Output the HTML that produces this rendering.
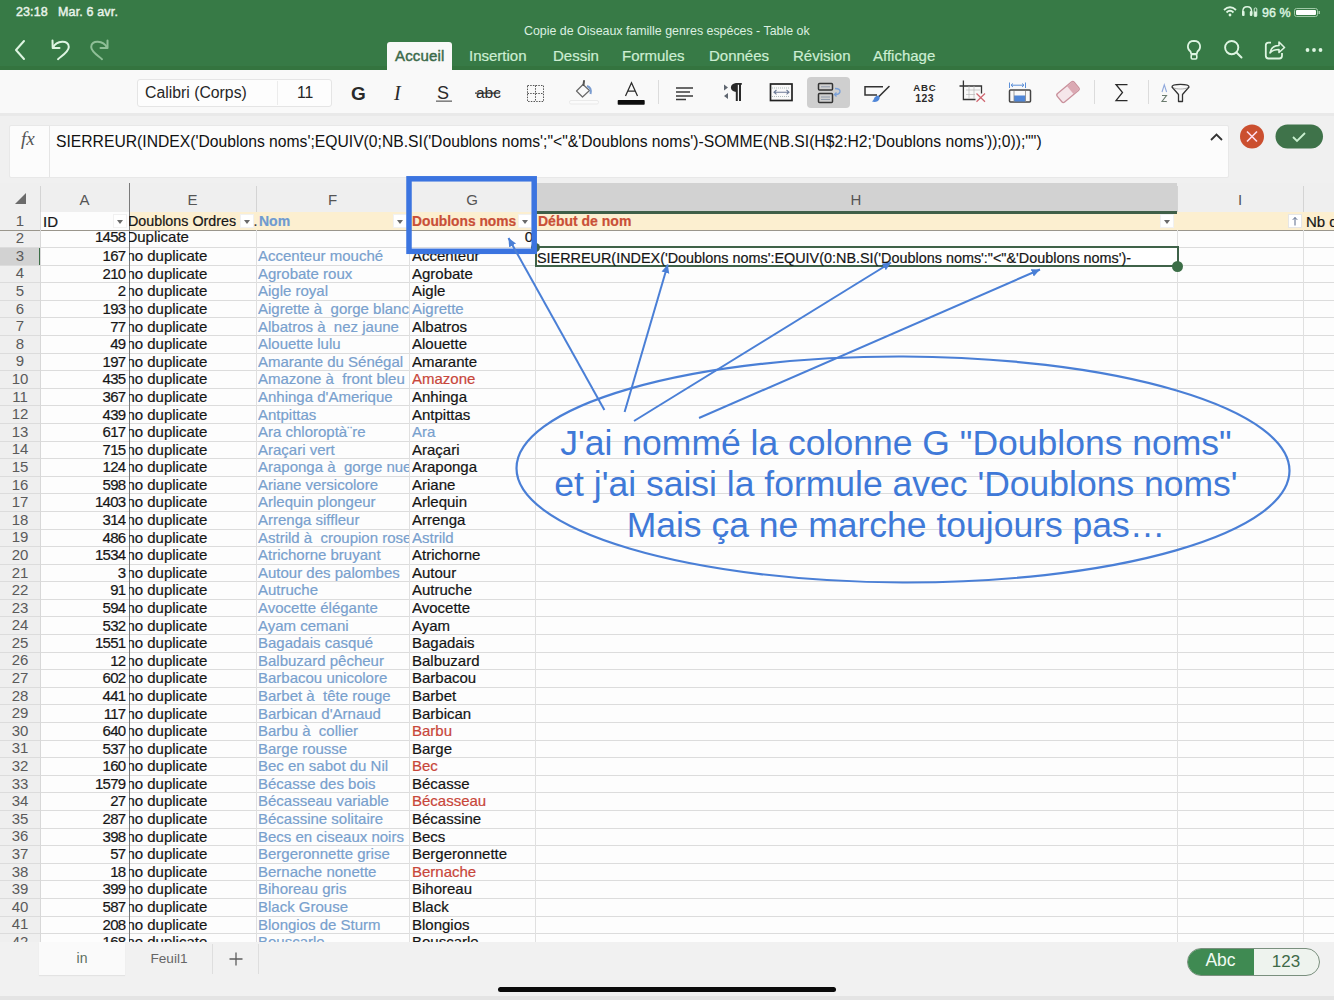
<!DOCTYPE html><html><head><meta charset="utf-8"><style>
*{margin:0;padding:0;box-sizing:border-box}
html,body{width:1334px;height:1000px;overflow:hidden;background:#f2f2f2;font-family:"Liberation Sans",sans-serif}
.a{position:absolute}
.t{position:absolute;white-space:nowrap;line-height:1}
.cell{position:absolute;white-space:pre;overflow:hidden;font-size:15px;line-height:17px;color:#161616;-webkit-text-stroke:0.2px}
.rn{position:absolute;left:0;width:40px;text-align:center;font-size:15px;color:#5a5a5a;line-height:17px}
.fb{position:absolute;width:14px;height:14px;background:#fff;border:1px solid #f1f1f1}
.fb:after{content:"";position:absolute;left:3px;top:5px;border-left:3.5px solid transparent;border-right:3.5px solid transparent;border-top:4px solid #6a6a6a}
</style></head><body>
<div class="a" style="left:0;top:0;width:1334px;height:70px;background:#377a46"></div>
<div class="a" style="left:0;top:66px;width:1334px;height:4px;background:#34743f"></div>
<div class="t" style="left:16px;top:6px;font-size:12.5px;color:#e8f3ea;-webkit-text-stroke:0.45px #e8f3ea;letter-spacing:0.1px">23:18</div>
<div class="t" style="left:58px;top:6px;font-size:12.5px;color:#e8f3ea;-webkit-text-stroke:0.45px #e8f3ea;letter-spacing:0.15px">Mar. 6 avr.</div>
<div class="t" style="left:524px;top:25px;font-size:12.4px;color:#dcefe0">Copie de Oiseaux famille genres espéces - Table ok</div>
<div class="a" style="left:387px;top:42px;width:65px;height:28px;background:#f8f8f8;border-radius:3px 3px 0 0"></div>
<div class="t" style="left:395px;top:48px;font-size:15px;color:#3b6a49;-webkit-text-stroke:0.45px #3b6a49;letter-spacing:0.15px">Accueil</div>
<div class="t" style="left:469px;top:48px;font-size:15px;color:#cdeed3;-webkit-text-stroke:0.2px #cdeed3">Insertion</div>
<div class="t" style="left:553px;top:48px;font-size:15px;color:#cdeed3;-webkit-text-stroke:0.2px #cdeed3">Dessin</div>
<div class="t" style="left:622px;top:48px;font-size:15px;color:#cdeed3;-webkit-text-stroke:0.2px #cdeed3">Formules</div>
<div class="t" style="left:709px;top:48px;font-size:15px;color:#cdeed3;-webkit-text-stroke:0.2px #cdeed3">Données</div>
<div class="t" style="left:793px;top:48px;font-size:15px;color:#cdeed3;-webkit-text-stroke:0.2px #cdeed3">Révision</div>
<div class="t" style="left:873px;top:48px;font-size:15px;color:#cdeed3;-webkit-text-stroke:0.2px #cdeed3">Affichage</div>
<svg class="a" style="left:0;top:30px" width="130" height="40" viewBox="0 30 130 40">
<path d="M24 41 L16 50 L24 59" fill="none" stroke="#def5e2" stroke-width="2" stroke-linecap="round" stroke-linejoin="round"/>
<path d="M52.5 40.5 L52.7 48 L59.5 48" fill="none" stroke="#def5e2" stroke-width="2" stroke-linecap="round" stroke-linejoin="round"/>
<path d="M53 47.5 C56.5 40.5, 68.8 39.5, 68.8 47 C68.8 51.5, 63 55, 58 59.2" fill="none" stroke="#def5e2" stroke-width="2" stroke-linecap="round"/>
<path d="M107.5 40.5 L107.5 48 L100.5 48" fill="none" stroke="#8fbf97" stroke-width="2" stroke-linecap="round" stroke-linejoin="round"/>
<path d="M107 47.5 C103.5 40.5, 91.2 39.5, 91.2 47 C91.2 51.5, 97 55, 102 59.2" fill="none" stroke="#8fbf97" stroke-width="2" stroke-linecap="round"/>
</svg>
<svg class="a" style="left:1218px;top:4px" width="110" height="16" viewBox="1218 4 110 16">
<path d="M1224 10 Q1230 4.5 1236 10" fill="none" stroke="#def5e2" stroke-width="1.8"/>
<path d="M1226.5 12.5 Q1230 9 1233.5 12.5" fill="none" stroke="#def5e2" stroke-width="1.8"/>
<circle cx="1230" cy="15" r="1.4" fill="#def5e2"/>
<path d="M1242.8 14 L1242.8 11.5 Q1242.8 6.8 1247.2 6.8 Q1251.6 6.8 1251.6 11.5 L1251.6 14" fill="none" stroke="#def5e2" stroke-width="1.4"/>
<rect x="1242" y="11" width="2.6" height="5" rx="1" fill="#def5e2"/><rect x="1249.8" y="11" width="2.6" height="5" rx="1" fill="#def5e2"/>
<rect x="1254.2" y="8" width="2.6" height="8.5" rx="1" fill="none" stroke="#def5e2" stroke-width="0.9"/><rect x="1254.2" y="11.5" width="2.6" height="5" fill="#def5e2"/>
<rect x="1294.5" y="8.5" width="23" height="8" rx="2" fill="none" stroke="#9fc9a6" stroke-width="1"/>
<rect x="1296" y="10" width="20" height="5" rx="1" fill="#fff"/>
<rect x="1318.5" y="11" width="1.5" height="3" fill="#9fc9a6"/>
</svg>
<div class="t" style="left:1262px;top:6.5px;font-size:12.5px;color:#def5e2;-webkit-text-stroke:0.4px #def5e2">96 %</div>
<svg class="a" style="left:1180px;top:36px" width="154" height="30" viewBox="1180 36 154 30">
<path d="M1191.3 54 L1190.5 51.5 C1186.5 48.5 1186.8 41 1194 40.8 C1201.2 41 1201.5 48.5 1197.5 51.5 L1196.7 54 Z" fill="none" stroke="#def5e2" stroke-width="1.8" stroke-linejoin="round"/>
<rect x="1191.2" y="54.5" width="5.6" height="4.5" rx="1.2" fill="none" stroke="#def5e2" stroke-width="1.6"/>
<circle cx="1231.7" cy="47.6" r="6.6" fill="none" stroke="#def5e2" stroke-width="1.9"/>
<path d="M1236.5 52.5 L1241.5 57.5" stroke="#def5e2" stroke-width="2" stroke-linecap="round"/>
<path d="M1271 42.6 H1268.5 Q1265.8 42.6 1265.8 45.3 V55.8 Q1265.8 58.5 1268.5 58.5 H1279.3 Q1282 58.5 1282 55.8 V53" fill="none" stroke="#def5e2" stroke-width="1.8" stroke-linejoin="round"/>
<path d="M1270 53 C1271 47 1275 45.5 1279 45.5 L1279 42 L1284.5 47.5 L1279 52.5 L1279 49.5 C1275 49.5 1272 50.5 1270 53 Z" fill="none" stroke="#def5e2" stroke-width="1.6" stroke-linejoin="round"/>
<circle cx="1307.5" cy="50" r="1.9" fill="#def5e2"/><circle cx="1314" cy="50" r="1.9" fill="#def5e2"/><circle cx="1320.5" cy="50" r="1.9" fill="#def5e2"/>
</svg>
<div class="a" style="left:0;top:70px;width:1334px;height:44px;background:#f9f9f9"></div>
<div class="a" style="left:0;top:113px;width:1334px;height:3px;background:#e9e9e9"></div>
<div class="a" style="left:137px;top:79px;width:195px;height:28px;background:#fdfdfd;border:1px solid #e5e5e5;border-radius:3px"></div>
<div class="a" style="left:277px;top:81px;width:1px;height:24px;background:#ececec"></div>
<div class="t" style="left:145px;top:85px;font-size:15.8px;color:#262626">Calibri (Corps)</div>
<div class="t" style="left:297px;top:85px;font-size:15.8px;color:#262626">11</div>
<svg class="a" style="left:340px;top:72px" width="880" height="40" viewBox="340 72 880 40">
<text x="351" y="99.5" font-family="Liberation Sans" font-weight="bold" font-size="19" fill="#2a2a2a">G</text>
<text x="394" y="99.5" font-family="Liberation Serif" font-style="italic" font-size="20" fill="#2a2a2a">I</text>
<text x="437" y="98.5" font-family="Liberation Sans" font-size="18" fill="#2a2a2a">S</text>
<rect x="436" y="100.5" width="16" height="1.3" fill="#666"/>
<text x="476" y="98" font-family="Liberation Sans" font-size="15.5" fill="#2a2a2a">abc</text>
<rect x="475" y="92.5" width="25" height="1.2" fill="#2a2a2a"/>
<g fill="none" stroke="#555" stroke-width="1" stroke-dasharray="1.5 1.2">
<rect x="527.5" y="85.5" width="16" height="16"/><path d="M535.5 85.5 V101.5 M527.5 93.5 H543.5"/></g>
<path d="M576.5 91 L583 84.5 L589.5 90.5 L582.5 97 Z" fill="none" stroke="#6a6a6a" stroke-width="1.2" stroke-linejoin="round"/>
<path d="M583.5 85 L584 81" stroke="#555" stroke-width="2" stroke-linecap="round"/>
<path d="M587 86 Q592 87.5 590.5 94" fill="none" stroke="#7a9cd0" stroke-width="2"/>
<rect x="569.5" y="100.5" width="29" height="3.5" rx="1.5" fill="#fbfbfb" stroke="#e6e6e6" stroke-width="0.8"/>
<path d="M625.5 96 L631.5 82.8 L637.5 96 M627.8 91 H635.2" fill="none" stroke="#2a2a2a" stroke-width="1.25"/>
<rect x="617.7" y="100" width="27" height="4.8" rx="0.8" fill="#0d0d0d"/>
<rect x="658" y="80" width="1" height="24" fill="#dcdcdc"/>
<g stroke="#3a3a3a" stroke-width="1.5"><path d="M676 88 H693 M676 92 H690 M676 96 H693 M676 99.5 H686"/></g>
<path d="M724 84.5 L728 87.5 L724 90.5 Z M728 93 L724 96 L728 99 Z" fill="#5f6670"/>
<path d="M736.5 83 L736.5 92 C729 92 729 83 736.5 83 Z" fill="#2a2a2a"/>
<rect x="735.8" y="83" width="2" height="18" fill="#2a2a2a"/><rect x="739" y="83" width="2" height="18" fill="#2a2a2a"/><rect x="735.8" y="83" width="6" height="1.8" fill="#2a2a2a"/>
<rect x="770.5" y="84" width="21.5" height="16.5" fill="none" stroke="#222" stroke-width="1.7"/>
<path d="M772 88 H790 M772 96.5 H790" fill="none" stroke="#9aa" stroke-width="0.8" stroke-dasharray="1 1"/>
<path d="M774 92.2 H789 M776.5 90 L774 92.2 L776.5 94.4 M786.5 90 L789 92.2 L786.5 94.4" fill="none" stroke="#6c7a96" stroke-width="1.1"/>
<rect x="807" y="77" width="43" height="31" rx="4" fill="#cfcfcf"/>
<rect x="818.5" y="83.5" width="14" height="6.5" rx="1" fill="none" stroke="#333" stroke-width="1.5"/>
<rect x="818.5" y="93.5" width="14" height="9" rx="1" fill="none" stroke="#333" stroke-width="1.5"/>
<path d="M821 86.8 H830 M821 97 H830 M821 99.5 H830" stroke="#8a96a8" stroke-width="0.9"/>
<path d="M835 88.5 Q840.5 88.5 840 92 Q839 95 834.5 94.5 M836.5 92.5 L834.5 94.5 L836.5 96.5" fill="none" stroke="#7aa0d8" stroke-width="1.3"/>
<path d="M883 86.7 H865 V95 H877" fill="none" stroke="#333" stroke-width="1.5"/>
<path d="M889 86.5 L879 96.5" stroke="#333" stroke-width="1.6" stroke-linecap="round"/>
<path d="M878.5 95.5 Q881 98 878 101 Q875 102.5 872 101.5 Q874 99.5 874.5 97.5 Q876 95.5 878.5 95.5 Z" fill="#4f86d8"/>
<text x="913.3" y="90.6" font-family="Liberation Sans" font-weight="bold" font-size="9.6" fill="#2a2a2a" textLength="22.5">ABC</text>
<text x="915.2" y="101.8" font-family="Liberation Sans" font-weight="bold" font-size="10.4" fill="#2a2a2a" textLength="18.3">123</text>
<g fill="none" stroke="#333" stroke-width="1.3"><path d="M963.4 80.5 V99.5 H975.5 M959.5 86 H981.5 V93.5"/></g>
<path d="M966 90 H980 M966 94.5 H975 M969 86 V99 M974 86 V99" stroke="#b8b8b8" stroke-width="0.7"/>
<path d="M976.5 93.5 L985 101.8 M985 93.5 L976.5 101.8" stroke="#cf6670" stroke-width="1.2"/>
<path d="M1009.5 82.5 V88 M1025.5 82.5 V88 M1011 85.2 H1024 M1013 83.5 L1011 85.2 L1013 87 M1022 83.5 L1024 85.2 L1022 87" fill="none" stroke="#5b8fd8" stroke-width="1"/>
<rect x="1009.5" y="90" width="21" height="12" rx="1" fill="none" stroke="#444" stroke-width="1.5"/>
<rect x="1014" y="95.5" width="11.5" height="6" fill="#4f86d8"/>
<path d="M1014 91 V102 M1025.5 91 V102" stroke="#888" stroke-width="0.8"/>
<g transform="rotate(-40 1068 92)"><rect x="1057" y="86.5" width="22" height="11" rx="2" fill="#f5e6ea" stroke="#c9919c" stroke-width="1.3"/><rect x="1071" y="87" width="7.5" height="10" fill="#dba9b3"/></g>
<rect x="1094" y="80" width="1" height="24" fill="#dcdcdc"/>
<path d="M1127.5 84.5 H1116 L1122.5 92.5 L1116 100.5 H1127.5" fill="none" stroke="#2a2a2a" stroke-width="1.25"/>
<rect x="1148" y="80" width="1" height="24" fill="#dcdcdc"/>
<path d="M1162 92 L1164.3 84.8 L1166.6 92" fill="none" stroke="#8fa8dc" stroke-width="1.1"/>
<path d="M1162 95.5 H1166.5 L1162 101.5 H1166.8" fill="none" stroke="#6b7b6e" stroke-width="1.1"/>
<path d="M1172 87 C1172 83.5 1189 83.5 1189 87 L1182.5 94.5 V101.5 H1178.5 V94.5 Z" fill="none" stroke="#333" stroke-width="1.3" stroke-linejoin="round"/>
<path d="M1173 87.5 C1176 89.5 1185 89.5 1188 87.5" fill="none" stroke="#999" stroke-width="0.8"/>
</svg>
<div class="a" style="left:0;top:116px;width:1334px;height:67px;background:#f0f0f0"></div>
<div class="a" style="left:9px;top:125px;width:1220px;height:53px;background:#fcfcfc;border:1px solid #e8e8e8;border-radius:2px"></div>
<div class="a" style="left:49px;top:126px;width:1px;height:51px;background:#e5e5e5"></div>
<div class="t" style="left:21px;top:129px;font-family:'Liberation Serif';font-style:italic;font-size:19px;color:#555">fx</div>
<div class="t" style="left:56px;top:133.5px;font-size:15.7px;color:#111">SIERREUR(INDEX(&#x27;Doublons noms&#x27;;EQUIV(0;NB.SI(&#x27;Doublons noms&#x27;;&quot;&lt;&quot;&amp;&#x27;Doublons noms&#x27;)-SOMME(NB.SI(H$2:H2;&#x27;Doublons noms&#x27;));0));&quot;&quot;)</div>
<svg class="a" style="left:1205px;top:120px" width="125" height="34" viewBox="1205 120 125 34"><path d="M1211 140 L1216.5 134.5 L1222 140" fill="none" stroke="#333" stroke-width="1.8"/><circle cx="1252" cy="136.5" r="12" fill="#cb4f2f"/><path d="M1247 131.5 L1257 141.5 M1257 131.5 L1247 141.5" stroke="#fde" stroke-width="1.6"/><rect x="1275.5" y="124.5" width="47.5" height="24" rx="12" fill="#3f734a"/><path d="M1293 137 L1297 141 L1305 133" fill="none" stroke="#c9f0cf" stroke-width="1.8"/></svg>
<div class="a" style="left:0;top:183px;width:1334px;height:759px;background:#fdfdfd"></div>
<div class="a" style="left:0;top:183px;width:1334px;height:29px;background:#efefef"></div>
<div class="a" style="left:535px;top:183px;width:642px;height:29px;background:#d2d2d2"></div>
<svg class="a" style="left:14px;top:192px" width="14" height="14"><path d="M12 1 L12 12 L1 12 Z" fill="#6b6b6b"/></svg>
<div class="t" style="left:40px;width:89px;top:192px;text-align:center;font-size:15px;color:#555">A</div>
<div class="t" style="left:129px;width:127px;top:192px;text-align:center;font-size:15px;color:#555">E</div>
<div class="t" style="left:256px;width:153px;top:192px;text-align:center;font-size:15px;color:#555">F</div>
<div class="t" style="left:409px;width:126px;top:192px;text-align:center;font-size:15px;color:#555">G</div>
<div class="t" style="left:535px;width:642px;top:192px;text-align:center;font-size:15px;color:#555">H</div>
<div class="t" style="left:1177px;width:126px;top:192px;text-align:center;font-size:15px;color:#555">I</div>
<div class="a" style="left:40px;top:186px;width:1px;height:26px;background:#d4d4d4"></div>
<div class="a" style="left:129px;top:186px;width:1px;height:26px;background:#d4d4d4"></div>
<div class="a" style="left:256px;top:186px;width:1px;height:26px;background:#d4d4d4"></div>
<div class="a" style="left:409px;top:186px;width:1px;height:26px;background:#d4d4d4"></div>
<div class="a" style="left:535px;top:186px;width:1px;height:26px;background:#d4d4d4"></div>
<div class="a" style="left:1177px;top:186px;width:1px;height:26px;background:#d4d4d4"></div>
<div class="a" style="left:1303px;top:186px;width:1px;height:26px;background:#d4d4d4"></div>
<div class="a" style="left:0;top:212px;width:40px;height:730px;background:#efefef"></div>
<div class="a" style="left:0;top:247.59px;width:40px;height:17.59px;background:#d2d2d2"></div>
<div class="a" style="left:38.5px;top:247.59px;width:2px;height:17.59px;background:#3c6e47"></div>
<div class="a" style="left:129px;top:212px;width:1205px;height:18px;background:#fcefd0"></div>
<div class="a" style="left:535px;top:211px;width:642px;height:2.5px;background:#3f5f48"></div>
<div class="a" style="left:40px;top:229.50px;width:1294px;height:1px;background:#dcdcdc"></div>
<div class="a" style="left:0;top:229.50px;width:40px;height:1px;background:#dcdcdc"></div>
<div class="a" style="left:40px;top:247.09px;width:1294px;height:1px;background:#dcdcdc"></div>
<div class="a" style="left:0;top:247.09px;width:40px;height:1px;background:#dcdcdc"></div>
<div class="a" style="left:40px;top:264.68px;width:1294px;height:1px;background:#dcdcdc"></div>
<div class="a" style="left:0;top:264.68px;width:40px;height:1px;background:#dcdcdc"></div>
<div class="a" style="left:40px;top:282.27px;width:1294px;height:1px;background:#dcdcdc"></div>
<div class="a" style="left:0;top:282.27px;width:40px;height:1px;background:#dcdcdc"></div>
<div class="a" style="left:40px;top:299.86px;width:1294px;height:1px;background:#dcdcdc"></div>
<div class="a" style="left:0;top:299.86px;width:40px;height:1px;background:#dcdcdc"></div>
<div class="a" style="left:40px;top:317.45px;width:1294px;height:1px;background:#dcdcdc"></div>
<div class="a" style="left:0;top:317.45px;width:40px;height:1px;background:#dcdcdc"></div>
<div class="a" style="left:40px;top:335.04px;width:1294px;height:1px;background:#dcdcdc"></div>
<div class="a" style="left:0;top:335.04px;width:40px;height:1px;background:#dcdcdc"></div>
<div class="a" style="left:40px;top:352.63px;width:1294px;height:1px;background:#dcdcdc"></div>
<div class="a" style="left:0;top:352.63px;width:40px;height:1px;background:#dcdcdc"></div>
<div class="a" style="left:40px;top:370.22px;width:1294px;height:1px;background:#dcdcdc"></div>
<div class="a" style="left:0;top:370.22px;width:40px;height:1px;background:#dcdcdc"></div>
<div class="a" style="left:40px;top:387.81px;width:1294px;height:1px;background:#dcdcdc"></div>
<div class="a" style="left:0;top:387.81px;width:40px;height:1px;background:#dcdcdc"></div>
<div class="a" style="left:40px;top:405.40px;width:1294px;height:1px;background:#dcdcdc"></div>
<div class="a" style="left:0;top:405.40px;width:40px;height:1px;background:#dcdcdc"></div>
<div class="a" style="left:40px;top:422.99px;width:1294px;height:1px;background:#dcdcdc"></div>
<div class="a" style="left:0;top:422.99px;width:40px;height:1px;background:#dcdcdc"></div>
<div class="a" style="left:40px;top:440.58px;width:1294px;height:1px;background:#dcdcdc"></div>
<div class="a" style="left:0;top:440.58px;width:40px;height:1px;background:#dcdcdc"></div>
<div class="a" style="left:40px;top:458.17px;width:1294px;height:1px;background:#dcdcdc"></div>
<div class="a" style="left:0;top:458.17px;width:40px;height:1px;background:#dcdcdc"></div>
<div class="a" style="left:40px;top:475.76px;width:1294px;height:1px;background:#dcdcdc"></div>
<div class="a" style="left:0;top:475.76px;width:40px;height:1px;background:#dcdcdc"></div>
<div class="a" style="left:40px;top:493.35px;width:1294px;height:1px;background:#dcdcdc"></div>
<div class="a" style="left:0;top:493.35px;width:40px;height:1px;background:#dcdcdc"></div>
<div class="a" style="left:40px;top:510.94px;width:1294px;height:1px;background:#dcdcdc"></div>
<div class="a" style="left:0;top:510.94px;width:40px;height:1px;background:#dcdcdc"></div>
<div class="a" style="left:40px;top:528.53px;width:1294px;height:1px;background:#dcdcdc"></div>
<div class="a" style="left:0;top:528.53px;width:40px;height:1px;background:#dcdcdc"></div>
<div class="a" style="left:40px;top:546.12px;width:1294px;height:1px;background:#dcdcdc"></div>
<div class="a" style="left:0;top:546.12px;width:40px;height:1px;background:#dcdcdc"></div>
<div class="a" style="left:40px;top:563.71px;width:1294px;height:1px;background:#dcdcdc"></div>
<div class="a" style="left:0;top:563.71px;width:40px;height:1px;background:#dcdcdc"></div>
<div class="a" style="left:40px;top:581.30px;width:1294px;height:1px;background:#dcdcdc"></div>
<div class="a" style="left:0;top:581.30px;width:40px;height:1px;background:#dcdcdc"></div>
<div class="a" style="left:40px;top:598.89px;width:1294px;height:1px;background:#dcdcdc"></div>
<div class="a" style="left:0;top:598.89px;width:40px;height:1px;background:#dcdcdc"></div>
<div class="a" style="left:40px;top:616.48px;width:1294px;height:1px;background:#dcdcdc"></div>
<div class="a" style="left:0;top:616.48px;width:40px;height:1px;background:#dcdcdc"></div>
<div class="a" style="left:40px;top:634.07px;width:1294px;height:1px;background:#dcdcdc"></div>
<div class="a" style="left:0;top:634.07px;width:40px;height:1px;background:#dcdcdc"></div>
<div class="a" style="left:40px;top:651.66px;width:1294px;height:1px;background:#dcdcdc"></div>
<div class="a" style="left:0;top:651.66px;width:40px;height:1px;background:#dcdcdc"></div>
<div class="a" style="left:40px;top:669.25px;width:1294px;height:1px;background:#dcdcdc"></div>
<div class="a" style="left:0;top:669.25px;width:40px;height:1px;background:#dcdcdc"></div>
<div class="a" style="left:40px;top:686.84px;width:1294px;height:1px;background:#dcdcdc"></div>
<div class="a" style="left:0;top:686.84px;width:40px;height:1px;background:#dcdcdc"></div>
<div class="a" style="left:40px;top:704.43px;width:1294px;height:1px;background:#dcdcdc"></div>
<div class="a" style="left:0;top:704.43px;width:40px;height:1px;background:#dcdcdc"></div>
<div class="a" style="left:40px;top:722.02px;width:1294px;height:1px;background:#dcdcdc"></div>
<div class="a" style="left:0;top:722.02px;width:40px;height:1px;background:#dcdcdc"></div>
<div class="a" style="left:40px;top:739.61px;width:1294px;height:1px;background:#dcdcdc"></div>
<div class="a" style="left:0;top:739.61px;width:40px;height:1px;background:#dcdcdc"></div>
<div class="a" style="left:40px;top:757.20px;width:1294px;height:1px;background:#dcdcdc"></div>
<div class="a" style="left:0;top:757.20px;width:40px;height:1px;background:#dcdcdc"></div>
<div class="a" style="left:40px;top:774.79px;width:1294px;height:1px;background:#dcdcdc"></div>
<div class="a" style="left:0;top:774.79px;width:40px;height:1px;background:#dcdcdc"></div>
<div class="a" style="left:40px;top:792.38px;width:1294px;height:1px;background:#dcdcdc"></div>
<div class="a" style="left:0;top:792.38px;width:40px;height:1px;background:#dcdcdc"></div>
<div class="a" style="left:40px;top:809.97px;width:1294px;height:1px;background:#dcdcdc"></div>
<div class="a" style="left:0;top:809.97px;width:40px;height:1px;background:#dcdcdc"></div>
<div class="a" style="left:40px;top:827.56px;width:1294px;height:1px;background:#dcdcdc"></div>
<div class="a" style="left:0;top:827.56px;width:40px;height:1px;background:#dcdcdc"></div>
<div class="a" style="left:40px;top:845.15px;width:1294px;height:1px;background:#dcdcdc"></div>
<div class="a" style="left:0;top:845.15px;width:40px;height:1px;background:#dcdcdc"></div>
<div class="a" style="left:40px;top:862.74px;width:1294px;height:1px;background:#dcdcdc"></div>
<div class="a" style="left:0;top:862.74px;width:40px;height:1px;background:#dcdcdc"></div>
<div class="a" style="left:40px;top:880.33px;width:1294px;height:1px;background:#dcdcdc"></div>
<div class="a" style="left:0;top:880.33px;width:40px;height:1px;background:#dcdcdc"></div>
<div class="a" style="left:40px;top:897.92px;width:1294px;height:1px;background:#dcdcdc"></div>
<div class="a" style="left:0;top:897.92px;width:40px;height:1px;background:#dcdcdc"></div>
<div class="a" style="left:40px;top:915.51px;width:1294px;height:1px;background:#dcdcdc"></div>
<div class="a" style="left:0;top:915.51px;width:40px;height:1px;background:#dcdcdc"></div>
<div class="a" style="left:40px;top:933.10px;width:1294px;height:1px;background:#dcdcdc"></div>
<div class="a" style="left:0;top:933.10px;width:40px;height:1px;background:#dcdcdc"></div>
<div class="a" style="left:0;top:229.5px;width:1334px;height:1.3px;background:#9a968c"></div>
<div class="a" style="left:40px;top:212px;width:1px;height:730px;background:#d8d8d8"></div>
<div class="a" style="left:129px;top:230px;width:1px;height:712px;background:#e0e0e0"></div>
<div class="a" style="left:256px;top:230px;width:1px;height:712px;background:#e0e0e0"></div>
<div class="a" style="left:409px;top:230px;width:1px;height:712px;background:#e0e0e0"></div>
<div class="a" style="left:535px;top:230px;width:1px;height:712px;background:#e0e0e0"></div>
<div class="a" style="left:1177px;top:230px;width:1px;height:712px;background:#e0e0e0"></div>
<div class="a" style="left:1303px;top:230px;width:1px;height:712px;background:#e0e0e0"></div>
<div class="a" style="left:128.5px;top:183px;width:1.5px;height:759px;background:#7a7a7a"></div>
<div class="rn" style="top:211.50px">1</div>
<div class="rn" style="top:229.29px">2</div>
<div class="rn" style="top:246.88px">3</div>
<div class="rn" style="top:264.48px">4</div>
<div class="rn" style="top:282.06px">5</div>
<div class="rn" style="top:299.66px">6</div>
<div class="rn" style="top:317.25px">7</div>
<div class="rn" style="top:334.83px">8</div>
<div class="rn" style="top:352.43px">9</div>
<div class="rn" style="top:370.02px">10</div>
<div class="rn" style="top:387.61px">11</div>
<div class="rn" style="top:405.19px">12</div>
<div class="rn" style="top:422.79px">13</div>
<div class="rn" style="top:440.38px">14</div>
<div class="rn" style="top:457.96px">15</div>
<div class="rn" style="top:475.56px">16</div>
<div class="rn" style="top:493.15px">17</div>
<div class="rn" style="top:510.74px">18</div>
<div class="rn" style="top:528.32px">19</div>
<div class="rn" style="top:545.91px">20</div>
<div class="rn" style="top:563.50px">21</div>
<div class="rn" style="top:581.09px">22</div>
<div class="rn" style="top:598.68px">23</div>
<div class="rn" style="top:616.27px">24</div>
<div class="rn" style="top:633.86px">25</div>
<div class="rn" style="top:651.45px">26</div>
<div class="rn" style="top:669.04px">27</div>
<div class="rn" style="top:686.63px">28</div>
<div class="rn" style="top:704.23px">29</div>
<div class="rn" style="top:721.81px">30</div>
<div class="rn" style="top:739.40px">31</div>
<div class="rn" style="top:757.00px">32</div>
<div class="rn" style="top:774.58px">33</div>
<div class="rn" style="top:792.17px">34</div>
<div class="rn" style="top:809.76px">35</div>
<div class="rn" style="top:827.35px">36</div>
<div class="rn" style="top:844.94px">37</div>
<div class="rn" style="top:862.53px">38</div>
<div class="rn" style="top:880.12px">39</div>
<div class="rn" style="top:897.71px">40</div>
<div class="rn" style="top:915.30px">41</div>
<div class="rn" style="top:932.89px">42</div>
<div class="cell" style="left:43px;top:212.5px;width:70px;">ID</div>
<div class="cell" style="left:129px;top:212.5px;width:111px;font-size:14.3px;letter-spacing:0px"><span style='position:relative;left:-1px'>Doublons Ordres</span></div>
<div class="cell" style="left:253.5px;top:212.5px;width:6px;color:#333;font-size:14px">.</div>
<div class="cell" style="left:259px;top:212.5px;width:130px;font-weight:bold;color:#6f9bd0;font-size:14px">Nom</div>
<div class="cell" style="left:412px;top:212.5px;width:107px;font-weight:bold;color:#c94f37;font-size:13.8px">Doublons noms</div>
<div class="cell" style="left:538px;top:212.5px;width:300px;font-weight:bold;color:#c94f37;font-size:14px">Début de nom</div>
<div class="cell" style="left:1306px;top:212.5px;width:40px;font-size:15px">Nb d</div>
<div class="fb" style="left:113px;top:214px"></div>
<div class="fb" style="left:240px;top:214px"></div>
<div class="fb" style="left:393px;top:214px"></div>
<div class="fb" style="left:518px;top:214px"></div>
<div class="fb" style="left:1160px;top:214px"></div>
<div class="a" style="left:1288px;top:214px;width:14px;height:14px;background:#fff;border:1px solid #e6e6e6"></div>
<svg class="a" style="left:1288px;top:214px" width="14" height="14"><path d="M7 3.5 V11.5 M4.8 5.8 L7 3.5 L9.2 5.8" fill="none" stroke="#5a6a8a" stroke-width="1"/></svg>
<div class="cell" style="left:40px;width:85.5px;top:228.10px;text-align:right;font-size:15px;letter-spacing:-0.7px">1458</div>
<div class="cell" style="left:129px;width:126px;top:228.10px;"><span style="position:relative;left:-2.6px">Duplicate</span></div>
<div class="cell" style="left:409px;width:124px;top:228.10px;text-align:right">0</div>
<div class="cell" style="left:40px;width:85.5px;top:247.19px;text-align:right;font-size:15px;letter-spacing:-0.7px">167</div>
<div class="cell" style="left:129px;width:126px;top:247.19px;"><span style="position:relative;left:-2.6px">no duplicate</span></div>
<div class="cell" style="left:258px;width:151px;top:247.19px;color:#78a0cd">Accenteur mouché</div>
<div class="cell" style="left:412px;width:123px;top:247.19px;color:#141414">Accenteur</div>
<div class="cell" style="left:40px;width:85.5px;top:264.78px;text-align:right;font-size:15px;letter-spacing:-0.7px">210</div>
<div class="cell" style="left:129px;width:126px;top:264.78px;"><span style="position:relative;left:-2.6px">no duplicate</span></div>
<div class="cell" style="left:258px;width:151px;top:264.78px;color:#78a0cd">Agrobate roux</div>
<div class="cell" style="left:412px;width:123px;top:264.78px;color:#141414">Agrobate</div>
<div class="cell" style="left:40px;width:85.5px;top:282.37px;text-align:right;font-size:15px;letter-spacing:-0.7px">2</div>
<div class="cell" style="left:129px;width:126px;top:282.37px;"><span style="position:relative;left:-2.6px">no duplicate</span></div>
<div class="cell" style="left:258px;width:151px;top:282.37px;color:#78a0cd">Aigle royal</div>
<div class="cell" style="left:412px;width:123px;top:282.37px;color:#141414">Aigle</div>
<div class="cell" style="left:40px;width:85.5px;top:299.96px;text-align:right;font-size:15px;letter-spacing:-0.7px">193</div>
<div class="cell" style="left:129px;width:126px;top:299.96px;"><span style="position:relative;left:-2.6px">no duplicate</span></div>
<div class="cell" style="left:258px;width:151px;top:299.96px;color:#78a0cd">Aigrette à  gorge blanche</div>
<div class="cell" style="left:412px;width:123px;top:299.96px;color:#78a0cd">Aigrette</div>
<div class="cell" style="left:40px;width:85.5px;top:317.55px;text-align:right;font-size:15px;letter-spacing:-0.7px">77</div>
<div class="cell" style="left:129px;width:126px;top:317.55px;"><span style="position:relative;left:-2.6px">no duplicate</span></div>
<div class="cell" style="left:258px;width:151px;top:317.55px;color:#78a0cd">Albatros à  nez jaune</div>
<div class="cell" style="left:412px;width:123px;top:317.55px;color:#141414">Albatros</div>
<div class="cell" style="left:40px;width:85.5px;top:335.14px;text-align:right;font-size:15px;letter-spacing:-0.7px">49</div>
<div class="cell" style="left:129px;width:126px;top:335.14px;"><span style="position:relative;left:-2.6px">no duplicate</span></div>
<div class="cell" style="left:258px;width:151px;top:335.14px;color:#78a0cd">Alouette lulu</div>
<div class="cell" style="left:412px;width:123px;top:335.14px;color:#141414">Alouette</div>
<div class="cell" style="left:40px;width:85.5px;top:352.73px;text-align:right;font-size:15px;letter-spacing:-0.7px">197</div>
<div class="cell" style="left:129px;width:126px;top:352.73px;"><span style="position:relative;left:-2.6px">no duplicate</span></div>
<div class="cell" style="left:258px;width:151px;top:352.73px;color:#78a0cd">Amarante du Sénégal</div>
<div class="cell" style="left:412px;width:123px;top:352.73px;color:#141414">Amarante</div>
<div class="cell" style="left:40px;width:85.5px;top:370.32px;text-align:right;font-size:15px;letter-spacing:-0.7px">435</div>
<div class="cell" style="left:129px;width:126px;top:370.32px;"><span style="position:relative;left:-2.6px">no duplicate</span></div>
<div class="cell" style="left:258px;width:151px;top:370.32px;color:#78a0cd">Amazone à  front bleu</div>
<div class="cell" style="left:412px;width:123px;top:370.32px;color:#c8463a">Amazone</div>
<div class="cell" style="left:40px;width:85.5px;top:387.91px;text-align:right;font-size:15px;letter-spacing:-0.7px">367</div>
<div class="cell" style="left:129px;width:126px;top:387.91px;"><span style="position:relative;left:-2.6px">no duplicate</span></div>
<div class="cell" style="left:258px;width:151px;top:387.91px;color:#78a0cd">Anhinga d&#x27;Amerique</div>
<div class="cell" style="left:412px;width:123px;top:387.91px;color:#141414">Anhinga</div>
<div class="cell" style="left:40px;width:85.5px;top:405.50px;text-align:right;font-size:15px;letter-spacing:-0.7px">439</div>
<div class="cell" style="left:129px;width:126px;top:405.50px;"><span style="position:relative;left:-2.6px">no duplicate</span></div>
<div class="cell" style="left:258px;width:151px;top:405.50px;color:#78a0cd">Antpittas</div>
<div class="cell" style="left:412px;width:123px;top:405.50px;color:#141414">Antpittas</div>
<div class="cell" style="left:40px;width:85.5px;top:423.09px;text-align:right;font-size:15px;letter-spacing:-0.7px">617</div>
<div class="cell" style="left:129px;width:126px;top:423.09px;"><span style="position:relative;left:-2.6px">no duplicate</span></div>
<div class="cell" style="left:258px;width:151px;top:423.09px;color:#78a0cd">Ara chloroptà¨re</div>
<div class="cell" style="left:412px;width:123px;top:423.09px;color:#78a0cd">Ara</div>
<div class="cell" style="left:40px;width:85.5px;top:440.68px;text-align:right;font-size:15px;letter-spacing:-0.7px">715</div>
<div class="cell" style="left:129px;width:126px;top:440.68px;"><span style="position:relative;left:-2.6px">no duplicate</span></div>
<div class="cell" style="left:258px;width:151px;top:440.68px;color:#78a0cd">Araçari vert</div>
<div class="cell" style="left:412px;width:123px;top:440.68px;color:#141414">Araçari</div>
<div class="cell" style="left:40px;width:85.5px;top:458.27px;text-align:right;font-size:15px;letter-spacing:-0.7px">124</div>
<div class="cell" style="left:129px;width:126px;top:458.27px;"><span style="position:relative;left:-2.6px">no duplicate</span></div>
<div class="cell" style="left:258px;width:151px;top:458.27px;color:#78a0cd">Araponga à  gorge nue</div>
<div class="cell" style="left:412px;width:123px;top:458.27px;color:#141414">Araponga</div>
<div class="cell" style="left:40px;width:85.5px;top:475.86px;text-align:right;font-size:15px;letter-spacing:-0.7px">598</div>
<div class="cell" style="left:129px;width:126px;top:475.86px;"><span style="position:relative;left:-2.6px">no duplicate</span></div>
<div class="cell" style="left:258px;width:151px;top:475.86px;color:#78a0cd">Ariane versicolore</div>
<div class="cell" style="left:412px;width:123px;top:475.86px;color:#141414">Ariane</div>
<div class="cell" style="left:40px;width:85.5px;top:493.45px;text-align:right;font-size:15px;letter-spacing:-0.7px">1403</div>
<div class="cell" style="left:129px;width:126px;top:493.45px;"><span style="position:relative;left:-2.6px">no duplicate</span></div>
<div class="cell" style="left:258px;width:151px;top:493.45px;color:#78a0cd">Arlequin plongeur</div>
<div class="cell" style="left:412px;width:123px;top:493.45px;color:#141414">Arlequin</div>
<div class="cell" style="left:40px;width:85.5px;top:511.04px;text-align:right;font-size:15px;letter-spacing:-0.7px">314</div>
<div class="cell" style="left:129px;width:126px;top:511.04px;"><span style="position:relative;left:-2.6px">no duplicate</span></div>
<div class="cell" style="left:258px;width:151px;top:511.04px;color:#78a0cd">Arrenga siffleur</div>
<div class="cell" style="left:412px;width:123px;top:511.04px;color:#141414">Arrenga</div>
<div class="cell" style="left:40px;width:85.5px;top:528.63px;text-align:right;font-size:15px;letter-spacing:-0.7px">486</div>
<div class="cell" style="left:129px;width:126px;top:528.63px;"><span style="position:relative;left:-2.6px">no duplicate</span></div>
<div class="cell" style="left:258px;width:151px;top:528.63px;color:#78a0cd">Astrild à  croupion rose</div>
<div class="cell" style="left:412px;width:123px;top:528.63px;color:#78a0cd">Astrild</div>
<div class="cell" style="left:40px;width:85.5px;top:546.22px;text-align:right;font-size:15px;letter-spacing:-0.7px">1534</div>
<div class="cell" style="left:129px;width:126px;top:546.22px;"><span style="position:relative;left:-2.6px">no duplicate</span></div>
<div class="cell" style="left:258px;width:151px;top:546.22px;color:#78a0cd">Atrichorne bruyant</div>
<div class="cell" style="left:412px;width:123px;top:546.22px;color:#141414">Atrichorne</div>
<div class="cell" style="left:40px;width:85.5px;top:563.81px;text-align:right;font-size:15px;letter-spacing:-0.7px">3</div>
<div class="cell" style="left:129px;width:126px;top:563.81px;"><span style="position:relative;left:-2.6px">no duplicate</span></div>
<div class="cell" style="left:258px;width:151px;top:563.81px;color:#78a0cd">Autour des palombes</div>
<div class="cell" style="left:412px;width:123px;top:563.81px;color:#141414">Autour</div>
<div class="cell" style="left:40px;width:85.5px;top:581.40px;text-align:right;font-size:15px;letter-spacing:-0.7px">91</div>
<div class="cell" style="left:129px;width:126px;top:581.40px;"><span style="position:relative;left:-2.6px">no duplicate</span></div>
<div class="cell" style="left:258px;width:151px;top:581.40px;color:#78a0cd">Autruche</div>
<div class="cell" style="left:412px;width:123px;top:581.40px;color:#141414">Autruche</div>
<div class="cell" style="left:40px;width:85.5px;top:598.99px;text-align:right;font-size:15px;letter-spacing:-0.7px">594</div>
<div class="cell" style="left:129px;width:126px;top:598.99px;"><span style="position:relative;left:-2.6px">no duplicate</span></div>
<div class="cell" style="left:258px;width:151px;top:598.99px;color:#78a0cd">Avocette élégante</div>
<div class="cell" style="left:412px;width:123px;top:598.99px;color:#141414">Avocette</div>
<div class="cell" style="left:40px;width:85.5px;top:616.58px;text-align:right;font-size:15px;letter-spacing:-0.7px">532</div>
<div class="cell" style="left:129px;width:126px;top:616.58px;"><span style="position:relative;left:-2.6px">no duplicate</span></div>
<div class="cell" style="left:258px;width:151px;top:616.58px;color:#78a0cd">Ayam cemani</div>
<div class="cell" style="left:412px;width:123px;top:616.58px;color:#141414">Ayam</div>
<div class="cell" style="left:40px;width:85.5px;top:634.17px;text-align:right;font-size:15px;letter-spacing:-0.7px">1551</div>
<div class="cell" style="left:129px;width:126px;top:634.17px;"><span style="position:relative;left:-2.6px">no duplicate</span></div>
<div class="cell" style="left:258px;width:151px;top:634.17px;color:#78a0cd">Bagadais casqué</div>
<div class="cell" style="left:412px;width:123px;top:634.17px;color:#141414">Bagadais</div>
<div class="cell" style="left:40px;width:85.5px;top:651.76px;text-align:right;font-size:15px;letter-spacing:-0.7px">12</div>
<div class="cell" style="left:129px;width:126px;top:651.76px;"><span style="position:relative;left:-2.6px">no duplicate</span></div>
<div class="cell" style="left:258px;width:151px;top:651.76px;color:#78a0cd">Balbuzard pêcheur</div>
<div class="cell" style="left:412px;width:123px;top:651.76px;color:#141414">Balbuzard</div>
<div class="cell" style="left:40px;width:85.5px;top:669.35px;text-align:right;font-size:15px;letter-spacing:-0.7px">602</div>
<div class="cell" style="left:129px;width:126px;top:669.35px;"><span style="position:relative;left:-2.6px">no duplicate</span></div>
<div class="cell" style="left:258px;width:151px;top:669.35px;color:#78a0cd">Barbacou unicolore</div>
<div class="cell" style="left:412px;width:123px;top:669.35px;color:#141414">Barbacou</div>
<div class="cell" style="left:40px;width:85.5px;top:686.94px;text-align:right;font-size:15px;letter-spacing:-0.7px">441</div>
<div class="cell" style="left:129px;width:126px;top:686.94px;"><span style="position:relative;left:-2.6px">no duplicate</span></div>
<div class="cell" style="left:258px;width:151px;top:686.94px;color:#78a0cd">Barbet à  tête rouge</div>
<div class="cell" style="left:412px;width:123px;top:686.94px;color:#141414">Barbet</div>
<div class="cell" style="left:40px;width:85.5px;top:704.53px;text-align:right;font-size:15px;letter-spacing:-0.7px">117</div>
<div class="cell" style="left:129px;width:126px;top:704.53px;"><span style="position:relative;left:-2.6px">no duplicate</span></div>
<div class="cell" style="left:258px;width:151px;top:704.53px;color:#78a0cd">Barbican d&#x27;Arnaud</div>
<div class="cell" style="left:412px;width:123px;top:704.53px;color:#141414">Barbican</div>
<div class="cell" style="left:40px;width:85.5px;top:722.12px;text-align:right;font-size:15px;letter-spacing:-0.7px">640</div>
<div class="cell" style="left:129px;width:126px;top:722.12px;"><span style="position:relative;left:-2.6px">no duplicate</span></div>
<div class="cell" style="left:258px;width:151px;top:722.12px;color:#78a0cd">Barbu à  collier</div>
<div class="cell" style="left:412px;width:123px;top:722.12px;color:#c8463a">Barbu</div>
<div class="cell" style="left:40px;width:85.5px;top:739.71px;text-align:right;font-size:15px;letter-spacing:-0.7px">537</div>
<div class="cell" style="left:129px;width:126px;top:739.71px;"><span style="position:relative;left:-2.6px">no duplicate</span></div>
<div class="cell" style="left:258px;width:151px;top:739.71px;color:#78a0cd">Barge rousse</div>
<div class="cell" style="left:412px;width:123px;top:739.71px;color:#141414">Barge</div>
<div class="cell" style="left:40px;width:85.5px;top:757.30px;text-align:right;font-size:15px;letter-spacing:-0.7px">160</div>
<div class="cell" style="left:129px;width:126px;top:757.30px;"><span style="position:relative;left:-2.6px">no duplicate</span></div>
<div class="cell" style="left:258px;width:151px;top:757.30px;color:#78a0cd">Bec en sabot du Nil</div>
<div class="cell" style="left:412px;width:123px;top:757.30px;color:#c8463a">Bec</div>
<div class="cell" style="left:40px;width:85.5px;top:774.89px;text-align:right;font-size:15px;letter-spacing:-0.7px">1579</div>
<div class="cell" style="left:129px;width:126px;top:774.89px;"><span style="position:relative;left:-2.6px">no duplicate</span></div>
<div class="cell" style="left:258px;width:151px;top:774.89px;color:#78a0cd">Bécasse des bois</div>
<div class="cell" style="left:412px;width:123px;top:774.89px;color:#141414">Bécasse</div>
<div class="cell" style="left:40px;width:85.5px;top:792.48px;text-align:right;font-size:15px;letter-spacing:-0.7px">27</div>
<div class="cell" style="left:129px;width:126px;top:792.48px;"><span style="position:relative;left:-2.6px">no duplicate</span></div>
<div class="cell" style="left:258px;width:151px;top:792.48px;color:#78a0cd">Bécasseau variable</div>
<div class="cell" style="left:412px;width:123px;top:792.48px;color:#c8463a">Bécasseau</div>
<div class="cell" style="left:40px;width:85.5px;top:810.07px;text-align:right;font-size:15px;letter-spacing:-0.7px">287</div>
<div class="cell" style="left:129px;width:126px;top:810.07px;"><span style="position:relative;left:-2.6px">no duplicate</span></div>
<div class="cell" style="left:258px;width:151px;top:810.07px;color:#78a0cd">Bécassine solitaire</div>
<div class="cell" style="left:412px;width:123px;top:810.07px;color:#141414">Bécassine</div>
<div class="cell" style="left:40px;width:85.5px;top:827.66px;text-align:right;font-size:15px;letter-spacing:-0.7px">398</div>
<div class="cell" style="left:129px;width:126px;top:827.66px;"><span style="position:relative;left:-2.6px">no duplicate</span></div>
<div class="cell" style="left:258px;width:151px;top:827.66px;color:#78a0cd">Becs en ciseaux noirs</div>
<div class="cell" style="left:412px;width:123px;top:827.66px;color:#141414">Becs</div>
<div class="cell" style="left:40px;width:85.5px;top:845.25px;text-align:right;font-size:15px;letter-spacing:-0.7px">57</div>
<div class="cell" style="left:129px;width:126px;top:845.25px;"><span style="position:relative;left:-2.6px">no duplicate</span></div>
<div class="cell" style="left:258px;width:151px;top:845.25px;color:#78a0cd">Bergeronnette grise</div>
<div class="cell" style="left:412px;width:123px;top:845.25px;color:#141414">Bergeronnette</div>
<div class="cell" style="left:40px;width:85.5px;top:862.84px;text-align:right;font-size:15px;letter-spacing:-0.7px">18</div>
<div class="cell" style="left:129px;width:126px;top:862.84px;"><span style="position:relative;left:-2.6px">no duplicate</span></div>
<div class="cell" style="left:258px;width:151px;top:862.84px;color:#78a0cd">Bernache nonette</div>
<div class="cell" style="left:412px;width:123px;top:862.84px;color:#c8463a">Bernache</div>
<div class="cell" style="left:40px;width:85.5px;top:880.43px;text-align:right;font-size:15px;letter-spacing:-0.7px">399</div>
<div class="cell" style="left:129px;width:126px;top:880.43px;"><span style="position:relative;left:-2.6px">no duplicate</span></div>
<div class="cell" style="left:258px;width:151px;top:880.43px;color:#78a0cd">Bihoreau gris</div>
<div class="cell" style="left:412px;width:123px;top:880.43px;color:#141414">Bihoreau</div>
<div class="cell" style="left:40px;width:85.5px;top:898.02px;text-align:right;font-size:15px;letter-spacing:-0.7px">587</div>
<div class="cell" style="left:129px;width:126px;top:898.02px;"><span style="position:relative;left:-2.6px">no duplicate</span></div>
<div class="cell" style="left:258px;width:151px;top:898.02px;color:#78a0cd">Black Grouse</div>
<div class="cell" style="left:412px;width:123px;top:898.02px;color:#141414">Black</div>
<div class="cell" style="left:40px;width:85.5px;top:915.61px;text-align:right;font-size:15px;letter-spacing:-0.7px">208</div>
<div class="cell" style="left:129px;width:126px;top:915.61px;"><span style="position:relative;left:-2.6px">no duplicate</span></div>
<div class="cell" style="left:258px;width:151px;top:915.61px;color:#78a0cd">Blongios de Sturm</div>
<div class="cell" style="left:412px;width:123px;top:915.61px;color:#141414">Blongios</div>
<div class="cell" style="left:40px;width:85.5px;top:933.20px;text-align:right;font-size:15px;letter-spacing:-0.7px">168</div>
<div class="cell" style="left:129px;width:126px;top:933.20px;"><span style="position:relative;left:-2.6px">no duplicate</span></div>
<div class="cell" style="left:258px;width:151px;top:933.20px;color:#78a0cd">Bouscarle</div>
<div class="cell" style="left:412px;width:123px;top:933.20px;color:#141414">Bouscarle</div>
<div class="a" style="left:534.5px;top:246px;width:644px;height:21px;background:#fff;border:2px solid #3f6249"></div>
<div class="cell" style="left:537px;width:640px;top:250px;font-size:14.4px">SIERREUR(INDEX(&#x27;Doublons noms&#x27;:EQUIV(0:NB.SI(&#x27;Doublons noms&#x27;:&quot;&lt;&quot;&amp;&#x27;Doublons noms&#x27;)-</div>
<div class="a" style="left:531px;top:243px;width:9px;height:9px;border-radius:50%;background:#3f6249"></div>
<div class="a" style="left:1171.5px;top:261px;width:11px;height:11px;border-radius:50%;background:#3c6e47"></div>
<div class="a" style="left:0;top:942px;width:1334px;height:58px;background:#f1f1f1"></div>
<div class="a" style="left:39px;top:942px;width:86px;height:33px;background:#fafafa;box-shadow:0 1px 1px #e3e3e3"></div>
<div class="t" style="left:39px;width:86px;top:951px;text-align:center;font-size:14px;color:#5b6f60">in</div>
<div class="t" style="left:130px;width:78px;top:951.5px;text-align:center;font-size:13.6px;color:#666">Feuil1</div>
<div class="a" style="left:212px;top:944px;width:1px;height:30px;background:#dedede"></div>
<div class="a" style="left:258px;top:944px;width:1px;height:30px;background:#dedede"></div>
<svg class="a" style="left:228px;top:951px" width="16" height="16"><path d="M8 1.5 V14.5 M1.5 8 H14.5" stroke="#5e5e5e" stroke-width="1.3"/></svg>
<div class="a" style="left:498px;top:986.5px;width:338px;height:5px;border-radius:3px;background:#0a0a0a"></div>
<div class="a" style="left:0;top:996px;width:1334px;height:4px;background:#e4e4e4"></div>
<div class="a" style="left:1187px;top:948px;width:133px;height:27.5px;border-radius:14px;background:#eef3ee;border:1px solid #7a8f7e;overflow:hidden"><div class="a" style="left:0;top:0;width:66px;height:100%;background:#3f8a52"></div></div>
<div class="t" style="left:1187px;width:67px;top:952px;text-align:center;font-size:17.5px;color:#f0fbf2">Abc</div>
<div class="t" style="left:1253px;width:66px;top:953px;text-align:center;font-size:17px;color:#3e6a48">123</div>
<svg class="a" style="left:0;top:0" width="1334" height="1000" viewBox="0 0 1334 1000">
<defs><marker id="ah" markerWidth="9" markerHeight="9" refX="8.5" refY="4.5" orient="auto" markerUnits="userSpaceOnUse">
<path d="M0 0.5 L8.5 4.5 L0 8.5 Z" fill="#4a7fd6"/></marker></defs>
<rect x="409" y="178.8" width="125.2" height="72.5" fill="none" stroke="#3b74e0" stroke-width="5.5"/>
<ellipse cx="903" cy="469.5" rx="386.5" ry="113" fill="none" stroke="#4a7fd6" stroke-width="2.2" transform="rotate(0.2 903 469.5)"/>
<g stroke="#4a7fd6" stroke-width="2" fill="none">
<line x1="604.4" y1="410" x2="508.5" y2="238" marker-end="url(#ah)"/>
<line x1="624.6" y1="412" x2="667.8" y2="264.5" marker-end="url(#ah)"/>
<line x1="634" y1="421" x2="891" y2="262.5" marker-end="url(#ah)"/>
<line x1="699" y1="418" x2="1040" y2="269.5" marker-end="url(#ah)"/>
</g>
<g font-family="Liberation Sans" font-size="35.5" fill="#3f79d8" text-anchor="middle">
<text x="896" y="455">J'ai nommé la colonne G "Doublons noms"</text>
<text x="896" y="496">et j'ai saisi la formule avec 'Doublons noms'</text>
<text x="896" y="537">Mais ça ne marche toujours pas…</text>
</g>
</svg>
</body></html>
